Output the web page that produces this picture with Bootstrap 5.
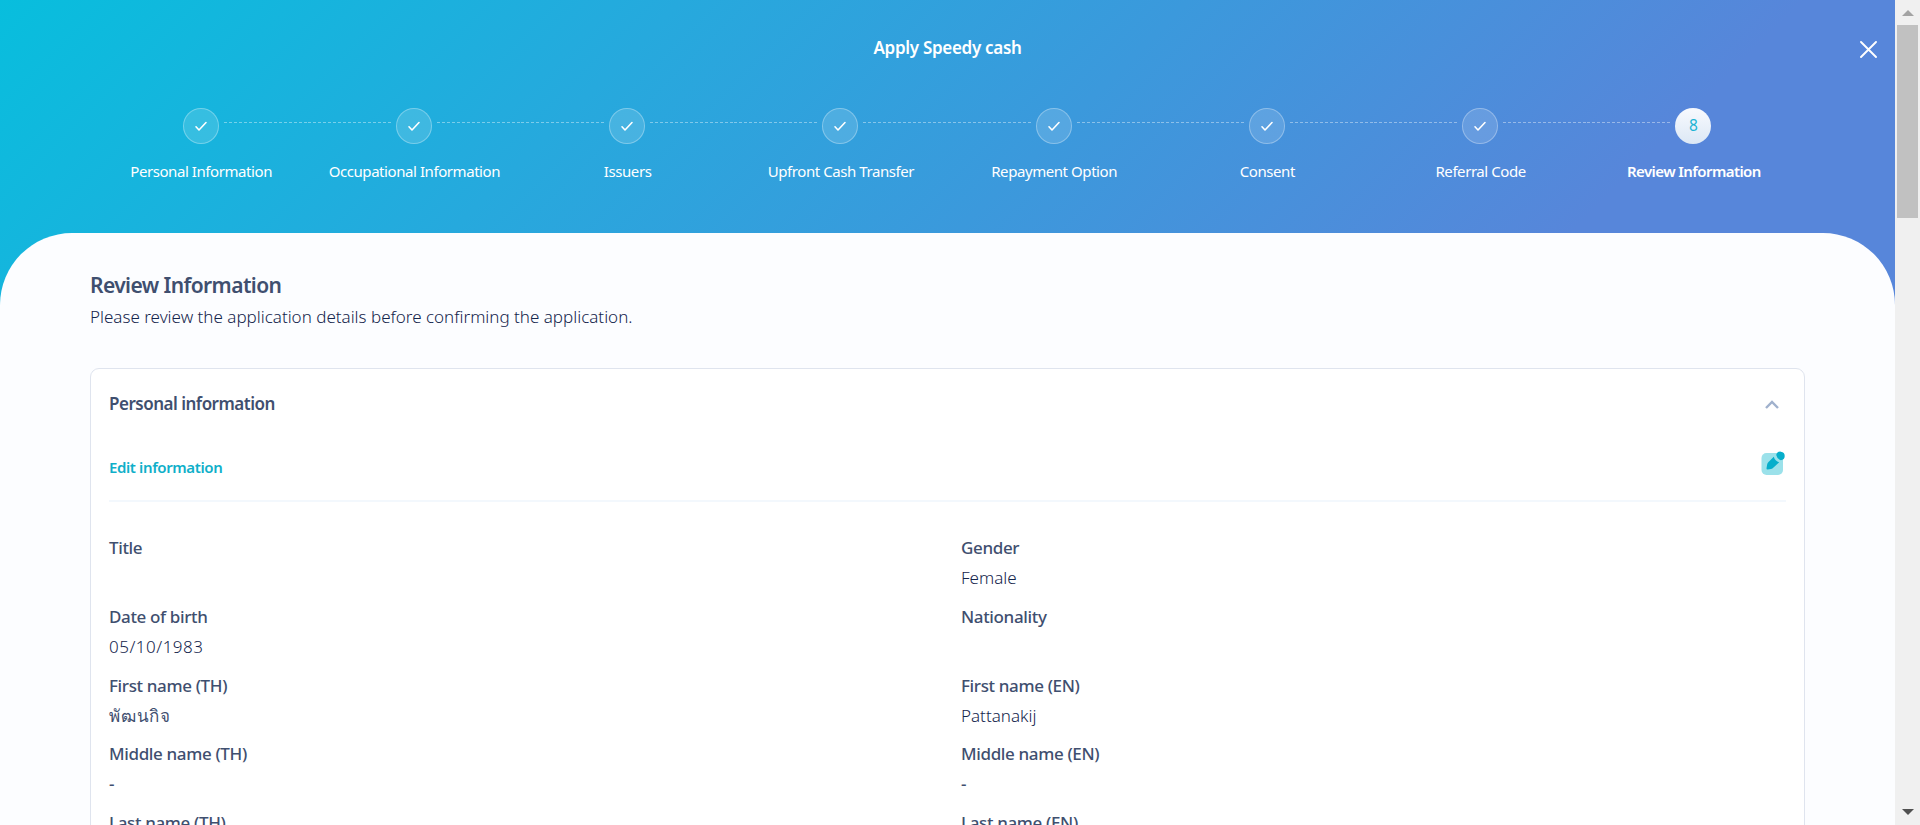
<!DOCTYPE html>
<html lang="en">
<head>
<meta charset="utf-8">
<meta name="viewport" content="width=device-width, initial-scale=1">
<title>Apply Speedy cash</title>
<link href="https://cdn.jsdelivr.net/npm/bootstrap@5.3.0/dist/css/bootstrap.min.css" rel="stylesheet">
<style>
  body { font-family: "Noto Sans", "Open Sans", sans-serif; color: #3f4f6f; background: #fcfdff; height: 825px; }
  .page { height: 825px; }
  .hero { height: 305px; background: linear-gradient(135deg, #08bedd 0%, #26a9dd 31%, #3b99dc 54%, #5786da 82%, #5786da 100%); color: #fff; }
  .hero-title { height: 96px; font-size: 17px; font-weight: 600; line-height: 96px; letter-spacing: -.3px; }
  .close-x { top: 41px; right: 18px; width: 17px; height: 17px; }
  .steps { padding: 12px 94.5px 0 94.5px; }
  .step { flex: 1 1 0; min-width: 0; }
  .dot { width: 36px; height: 36px; border: 1px solid rgba(255,255,255,.3); background: rgba(255,255,255,.14); }
  .dot-now { border: 0; background: linear-gradient(#f8fafe, #dce8f5); color: #1cb4d4; font-size: 15.5px; }
  .dash { flex: 1; height: 1px; margin-bottom: 8px; background: repeating-linear-gradient(90deg, rgba(255,255,255,.4) 0 3px, transparent 3px 5px); }
  .dash-l { margin-right: 4px; }
  .dash-r { margin-left: 5px; }
  .step-name { margin-top: 15px; font-size: 15px; line-height: 24px; white-space: nowrap; letter-spacing: -.43px; }
  .step-now { font-weight: 600; letter-spacing: -.58px; }
  .sheet { height: 592px; margin-top: -72px; border-radius: 72px 72px 0 0; background: #fcfdff; padding: 36px 90px 0; }
  .sheet h1 { font-size: 21px; line-height: 32px; font-weight: 600; margin: 0; letter-spacing: -.58px; }
  .intro { font-size: 17px; line-height: 30px; margin-top: 1px; color: #14254c; }
  .info { margin-top: 36px; border: 1px solid #dfe4ee; border-radius: 9px; height: 600px; background: #fff; padding: 0 18px; }
  .info-head { height: 70px; }
  .info-head h2 { font-size: 17px; font-weight: 600; margin: 0; letter-spacing: -.5px; }
  .chevron { margin-right: 7px; }
  .edit { height: 63px; border-bottom: 2px solid #f3f8fd; color: #0fafc9; font-weight: 600; font-size: 15px; letter-spacing: -.38px; }
  .edit-text { padding-top: 17px; }
  .edit-icon { margin: 12px 1px 0 0; }
  .fields { padding-top: 31px; margin-right: -27px; }
  .field { height: 68.8px; line-height: 30px; font-size: 17px; white-space: nowrap; }
  .field dt { font-weight: 500; letter-spacing: -.36px; }
  .field dd { margin: 0; font-weight: 300; color: #14254c; }
  .field .value-date { letter-spacing: .5px; }
  .field .value-thai { letter-spacing: .8px; color: #3f4f6f; }
  .field .value-none { font-weight: 500; color: #3f4f6f; }
  .scroller { width: 25px; height: 825px; background: #f0f0f0; padding: 10px 2px 0; }
  .thumb { height: 193px; background: #c1c1c1; margin-top: 9px; }
  .arrow-down { left: 7px; bottom: 10px; }
</style>
</head>
<body class="overflow-hidden">
<div class="page d-flex overflow-hidden">
  <main class="flex-grow-1 overflow-hidden">
    <header class="hero position-relative">
      <div class="hero-title text-center">Apply Speedy cash</div>
      <svg class="close-x position-absolute" viewBox="0 0 17 17" stroke="#fff" stroke-width="1.9" stroke-linecap="round"><path d="M1 1l15 15M16 1L1 16"/></svg>
      <div class="steps d-flex text-center" id="steps"></div>
    </header>
    <section class="sheet position-relative">
      <h1>Review Information</h1>
      <div class="intro fw-light">Please review the application details before confirming the application.</div>
      <div class="info">
        <div class="info-head d-flex align-items-center justify-content-between">
          <h2>Personal information</h2>
          <svg class="chevron" width="14" height="9" viewBox="0 0 14 9" fill="none" stroke="#a0b1cd" stroke-width="2.4"><path d="M1 8l6-6 6 6"/></svg>
        </div>
        <div class="edit d-flex justify-content-between">
          <span class="edit-text">Edit information</span>
          <svg class="edit-icon" width="24" height="24" viewBox="0 0 24 24"><rect x="0.500" y="2" width="21.500" height="22" rx="5" fill="#9be1ea"/><path d="M5.500 17.200L6.200 13.200Q6.500 12 7.500 11L12.800 5.800C13.500 8.500 15.500 10.600 18.200 11.200L12.500 16.500Q11.500 17.600 10 17.900L6.600 18.500Q5.300 18.500 5.500 17.200Z" fill="#06aecb"/><path d="M15.200 4A4.300 4.300 0 1 1 19.800 9.200A7 7 0 0 1 15.200 4Z" fill="#06aecb"/></svg>
        </div>
        <div class="fields row gx-0" id="fields"></div>
      </div>
    </section>
  </main>
  <aside class="scroller flex-shrink-0 position-relative">
    <svg class="d-block mx-auto" width="12" height="6" viewBox="0 0 12 6"><path d="M6 0l6 6H0z" fill="#a3a3a3"/></svg>
    <div class="thumb"></div>
    <svg class="arrow-down position-absolute" width="12" height="6" viewBox="0 0 12 6"><path d="M0 0h12L6 6z" fill="#505050"/></svg>
  </aside>
</div>
<script src="https://cdn.jsdelivr.net/npm/bootstrap@5.3.0/dist/js/bootstrap.bundle.min.js"></script>
<script>
  const steps = ["Personal Information", "Occupational Information", "Issuers", "Upfront Cash Transfer", "Repayment Option", "Consent", "Referral Code", "Review Information"];
  const check = '<svg width="14" height="12" viewBox="0 0 14 12" fill="none" stroke="#fff" stroke-width="1.600" stroke-linecap="round" stroke-linejoin="round"><path d="M2 6.800l3 3.200 7-7.500"/></svg>';
  document.getElementById("steps").innerHTML = steps.map((name, i) => {
    const last = i === steps.length - 1;
    return `<div class="step"><div class="d-flex align-items-center">
      <div class="dash dash-l ${i ? "" : "invisible"}"></div>
      <div class="dot rounded-circle d-flex align-items-center justify-content-center ${last ? "dot-now" : ""}">${last ? "8" : check}</div>
      <div class="dash dash-r ${last ? "invisible" : ""}"></div></div>
      <div class="step-name ${last ? "step-now" : ""}">${name}</div></div>`;
  }).join("");
  const fields = [["Title", ""], ["Gender", "Female"], ["Date of birth", "05/10/1983", "value-date"], ["Nationality", ""], ["First name (TH)", "พัฒนกิจ", "value-thai"], ["First name (EN)", "Pattanakij"], ["Middle name (TH)", "-", "value-none"], ["Middle name (EN)", "-", "value-none"], ["Last name (TH)", ""], ["Last name (EN)", ""]];
  document.getElementById("fields").innerHTML = fields.map(([k, v, c = ""]) => `<dl class="field col-6 mb-0"><dt>${k}</dt><dd class="${c}">${v}</dd></dl>`).join("");
</script>
</body>
</html>
